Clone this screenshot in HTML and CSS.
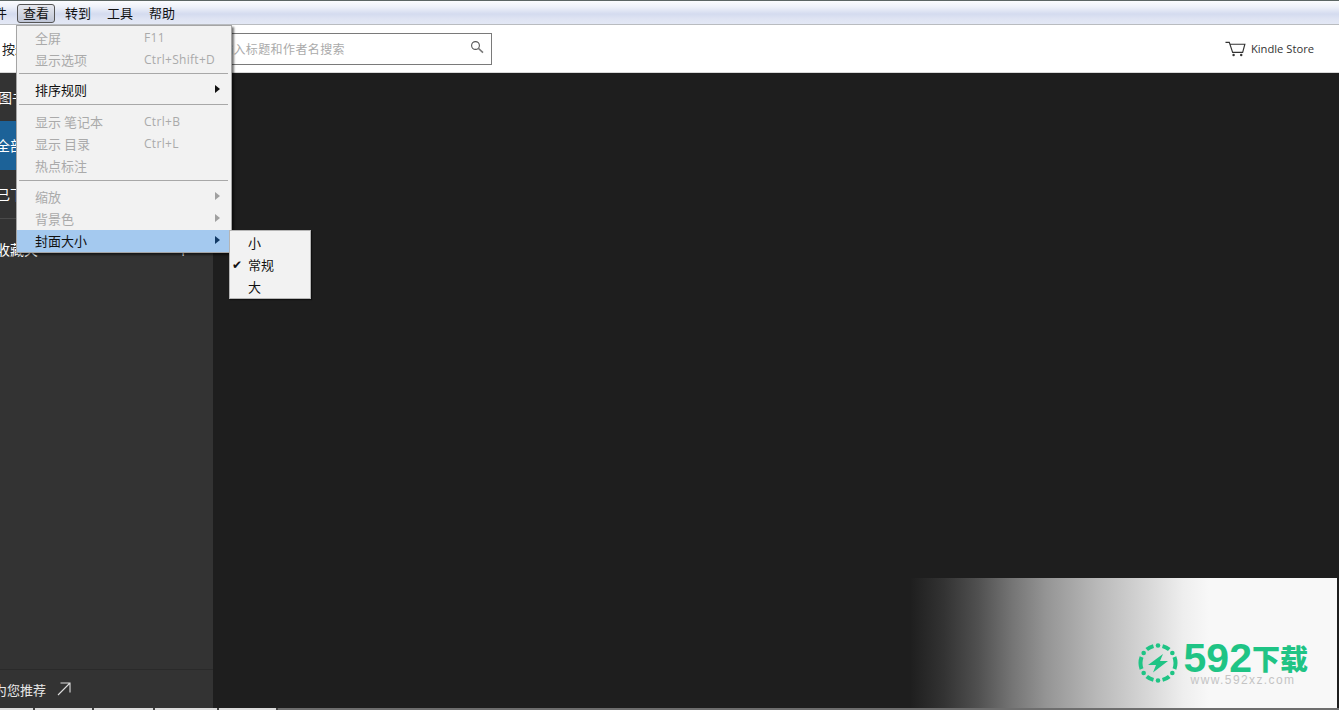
FILE: index.html
```html
<!DOCTYPE html>
<html lang="zh-CN">
<head>
    <meta charset="UTF-8">
    <meta name="viewport" content="width=device-width, initial-scale=1.0">
    <title>Kindle</title>
    <link rel="stylesheet" href="styles.css">
</head>
<body>
    <div class="app">
        <div class="top-line"></div>
        <div class="menubar">
            <span class="menubar-item">文件</span>
            <span class="menubar-item open">查看</span>
            <span class="menubar-item">转到</span>
            <span class="menubar-item">工具</span>
            <span class="menubar-item">帮助</span>
        </div>

        <div class="toolbar">
            <span class="sort-label">按最近</span>
            <div class="search">
                <span class="search-text">输入标题和作者名搜索</span>
                <svg class="search-icon" width="14" height="14" viewBox="0 0 14 14">
                    <circle cx="5.5" cy="5.5" r="3.9" fill="none" stroke="#555" stroke-width="1.1"/>
                    <path d="M8.4 8.4 L13 12.6" stroke="#777" stroke-width="1.5"/>
                </svg>
            </div>
            <div class="store">
                <svg width="21" height="16" viewBox="0 0 22 16">
                    <path d="M0.5 1 H4.5 L8 11.5 H18.5 L20.8 3 H5.5" fill="none" stroke="#333" stroke-width="1.2"/>
                    <circle cx="9" cy="14.2" r="1.3" fill="#333"/>
                    <circle cx="17" cy="14.2" r="1.3" fill="#333"/>
                </svg>
                <span>Kindle Store</span>
            </div>
        </div>

        <div class="content">
            <div class="sidebar">
                <div class="side-title">图书</div>
                <div class="side-row active">全部</div>
                <div class="side-row downloaded">已下载</div>
                <div class="side-collections">
                    <span>收藏夹</span>
                    <span class="side-add">+</span>
                </div>
                <div class="side-footer">
                    <span>为您推荐</span>
                    <svg width="14" height="14" viewBox="0 0 14 14">
                        <path d="M1 13 L12.5 1.5 M3.5 1 H13 V10.5" fill="none" stroke="#ddd" stroke-width="1.1"/>
                    </svg>
                </div>
            </div>
            <div class="library"></div>
        </div>
        <div class="bottom-line"></div>

        <div class="menu">
            <div class="menu-item disabled"><span class="label">全屏</span><span class="keys">F11</span></div>
            <div class="menu-item disabled"><span class="label">显示选项</span><span class="keys">Ctrl+Shift+D</span></div>
            <div class="menu-sep first"></div>
            <div class="menu-item"><span class="label">排序规则</span><i class="arrow"></i></div>
            <div class="menu-sep second"></div>
            <div class="menu-item disabled"><span class="label">显示 笔记本</span><span class="keys">Ctrl+B</span></div>
            <div class="menu-item disabled"><span class="label">显示 目录</span><span class="keys">Ctrl+L</span></div>
            <div class="menu-item disabled"><span class="label">热点标注</span></div>
            <div class="menu-sep third"></div>
            <div class="menu-item disabled"><span class="label">缩放</span><i class="arrow"></i></div>
            <div class="menu-item disabled"><span class="label">背景色</span><i class="arrow"></i></div>
            <div class="menu-item selected"><span class="label">封面大小</span><i class="arrow"></i></div>
        </div>

        <div class="submenu">
            <div class="sub-item">小</div>
            <div class="sub-item checked">常规</div>
            <div class="sub-item">大</div>
        </div>

        <div class="watermark">
            <svg class="ring" width="40" height="40" viewBox="0 0 40 40">
                <g fill="none" stroke="#1fc485" stroke-width="4">
                    <path d="M24.53 3.1 A17.5 17.5 0 0 1 31.25 6.59"/>
                    <path d="M36.44 14.01 A17.5 17.5 0 0 1 36.44 25.99"/>
                    <path d="M31.25 33.41 A17.5 17.5 0 0 1 24.53 36.9"/>
                    <path d="M15.47 36.9 A17.5 17.5 0 0 1 8.75 33.41"/>
                    <path d="M3.56 25.99 A17.5 17.5 0 0 1 3.56 14.01"/>
                    <path d="M8.75 6.59 A17.5 17.5 0 0 1 15.47 3.1"/>
                </g>
                <g fill="#1fc485">
                    <circle cx="20" cy="2.5" r="2.3"/>
                    <circle cx="34.33" cy="9.96" r="2.3"/>
                    <circle cx="34.33" cy="30.04" r="2.3"/>
                    <circle cx="20" cy="37.5" r="2.3"/>
                    <circle cx="5.67" cy="30.04" r="2.3"/>
                    <circle cx="5.67" cy="9.96" r="2.3"/>
                    <path d="M25 11 L10 22 H18 L15 29.5 L30 18 H22 Z"/>
                </g>
            </svg>
            <div class="brand">
                <div class="brand-name"><span class="digits">592</span><span class="cjk">下载</span></div>
                <div class="brand-url">www.592xz.com</div>
            </div>
        </div>
    </div>
</body>
</html>
```

FILE: styles.css
```css
html, body {
    margin: 0;
    padding: 0;
}

body {
    font-family: "Noto Sans CJK SC", "Noto Sans", sans-serif;
    font-size: 13px;
    background-color: #1e1e1e;
}

.app {
    position: relative;
    display: flex;
    flex-direction: column;
    width: 1339px;
    height: 710px;
    overflow: hidden;
}

.top-line {
    height: 1px;
    background-color: #5c6664;
}

/* menu bar */
.menubar {
    display: flex;
    gap: 4px;
    height: 24px;
    margin-left: -25px;
    padding-top: 3px;
    box-sizing: border-box;
    border-bottom: 1px solid #b9bcc0;
    background: linear-gradient(#fbfcfe 0, #eef1f9 6px, #d4dbef 13px, #dfe4f3 18px, #e3e8f5 100%);
}

.menubar-item {
    width: 38px;
    height: 19px;
    box-sizing: border-box;
    line-height: 18px;
    text-align: center;
    color: #111;
}

.menubar-item.open {
    border: 1px solid #555;
    border-radius: 3px;
    line-height: 16px;
    background: linear-gradient(#e6e8ee, #bfc5d6);
}

/* toolbar */
.toolbar {
    display: flex;
    align-items: center;
    height: 48px;
    border-bottom: 1px solid #d8d8d8;
    box-sizing: border-box;
    background-color: #fff;
}

.sort-label {
    width: 211px;
    padding-left: 2px;
    margin-right: 1px;
    color: #222;
}

.search {
    display: flex;
    align-items: center;
    justify-content: space-between;
    width: 278px;
    height: 32px;
    box-sizing: border-box;
    padding: 0 7px 0 6px;
    border: 1px solid #7a7a7a;
}

.search-text {
    font-size: 12px;
    letter-spacing: 0.4px;
    color: #aaa;
}

.search-icon {
    margin-bottom: 4px;
}

.store {
    display: flex;
    align-items: center;
    gap: 5px;
    margin-left: auto;
    padding-right: 25px;
    font-family: "Open Sans", sans-serif;
    font-size: 11.2px;
    color: #333;
}

/* main area */
.content {
    display: flex;
    flex: 1;
    min-height: 0;
}

.sidebar {
    display: flex;
    flex-direction: column;
    width: 213px;
    font-size: 14px;
    color: #fff;
    background-color: #333;
}

.side-title {
    height: 48px;
    line-height: 48px;
    margin-left: -2px;
}

.side-row {
    height: 48px;
    line-height: 48px;
    padding-left: 0;
    text-indent: -4px;
}

.side-row.active {
    height: 49px;
    background-color: #1c6298;
}

.side-row.downloaded {
    border-bottom: 1px solid #4a4a4a;
}

.side-collections {
    display: flex;
    justify-content: space-between;
    height: 48px;
    padding: 20px 26px 0 0;
    line-height: 20px;
    margin-left: -4px;
}

.side-add {
    margin-top: 3px;
    font-size: 14px;
}

.side-footer {
    display: flex;
    align-items: center;
    gap: 11px;
    margin-top: auto;
    height: 38px;
    margin-left: -6px;
    font-size: 13px;
    border-top: 1px solid #2a2a2a;
    color: #e8e8e8;
}

.library {
    flex: 1;
    background-color: #1e1e1e;
}

.bottom-line {
    height: 2px;
    background: linear-gradient(90deg,
        #ddd 0 33px, #444 33px 35px,
        #ddd 35px 92px, #444 92px 94px,
        #ddd 94px 153px, #444 153px 155px,
        #ddd 155px 217px, #444 217px 219px,
        #ddd 219px 276px, #444 276px 278px,
        #6e6e6e 278px);
}

/* view menu */
.menu {
    position: absolute;
    left: 16px;
    top: 25px;
    width: 216px;
    height: 228px;
    box-sizing: border-box;
    padding-top: 1px;
    border: 1px solid #a5a5a5;
    background-color: #f2f2f2;
    box-shadow: 2px 2px 2px rgba(0, 0, 0, 0.55);
}

.menu-item {
    display: flex;
    align-items: center;
    height: 22px;
    box-sizing: border-box;
    padding: 0 0 2px 18px;
    color: #111;
}

.menu-item.disabled {
    color: #aaa;
}

.menu-item.selected {
    background-color: #a4c9ef;
}

.label {
    width: 109px;
}

.keys {
    font-family: "Open Sans", sans-serif;
    font-size: 12px;
    letter-spacing: 0.3px;
}

.arrow {
    margin-left: auto;
    margin-right: 11px;
    border-left: 5px solid #111;
    border-top: 4px solid transparent;
    border-bottom: 4px solid transparent;
}

.disabled .arrow {
    border-left-color: #a0a0a0;
}

.selected .arrow {
    border-left-color: #123a66;
}

.menu-sep {
    height: 1px;
    margin: 2px 3px 5px 2px;
    background-color: #a8a8a8;
}

.menu-sep.second {
    margin: 3px 3px 6px 2px;
}

.menu-sep.third {
    margin: 3px 3px 5px 2px;
}

/* cover size submenu */
.submenu {
    position: absolute;
    left: 229px;
    top: 230px;
    width: 82px;
    height: 69px;
    box-sizing: border-box;
    padding-top: 2px;
    border: 1px solid #b5b5b5;
    background-color: #f2f2f2;
    box-shadow: 1px 1px 1px rgba(0, 0, 0, 0.45);
}

.sub-item {
    position: relative;
    height: 22px;
    line-height: 20px;
    padding-left: 18px;
    color: #111;
}

.sub-item.checked::before {
    content: "✔";
    position: absolute;
    left: 2px;
    top: 0;
    font-family: "DejaVu Sans", sans-serif;
    font-size: 12px;
}

/* watermark */
.watermark {
    position: absolute;
    left: 910px;
    top: 578px;
    display: flex;
    align-items: flex-end;
    justify-content: flex-end;
    gap: 6px;
    width: 427px;
    height: 130px;
    box-sizing: border-box;
    padding: 0 29px 22px 0;
    background: linear-gradient(90deg, #1e1e1e 0, #333 8%, #505050 16%, #757575 24%, #959595 32%, #b9b9b9 44%, #d8d8d8 56%, #eee 64%, #f8f8f8 70%);
}

.ring {
    margin-bottom: 3px;
}

.brand {
    display: flex;
    flex-direction: column;
    align-items: flex-start;
}

.brand-name {
    display: flex;
    align-items: center;
    height: 32px;
    color: #1fc485;
    font-weight: 700;
}

.digits {
    font-family: "Liberation Sans", sans-serif;
    font-size: 41px;
}

.cjk {
    font-size: 28px;
    font-weight: 900;
}

.brand-url {
    margin-left: 7px;
    font-family: "Liberation Sans", sans-serif;
    font-size: 12px;
    line-height: 12px;
    letter-spacing: 1.4px;
    color: #c4c4c4;
}
```
